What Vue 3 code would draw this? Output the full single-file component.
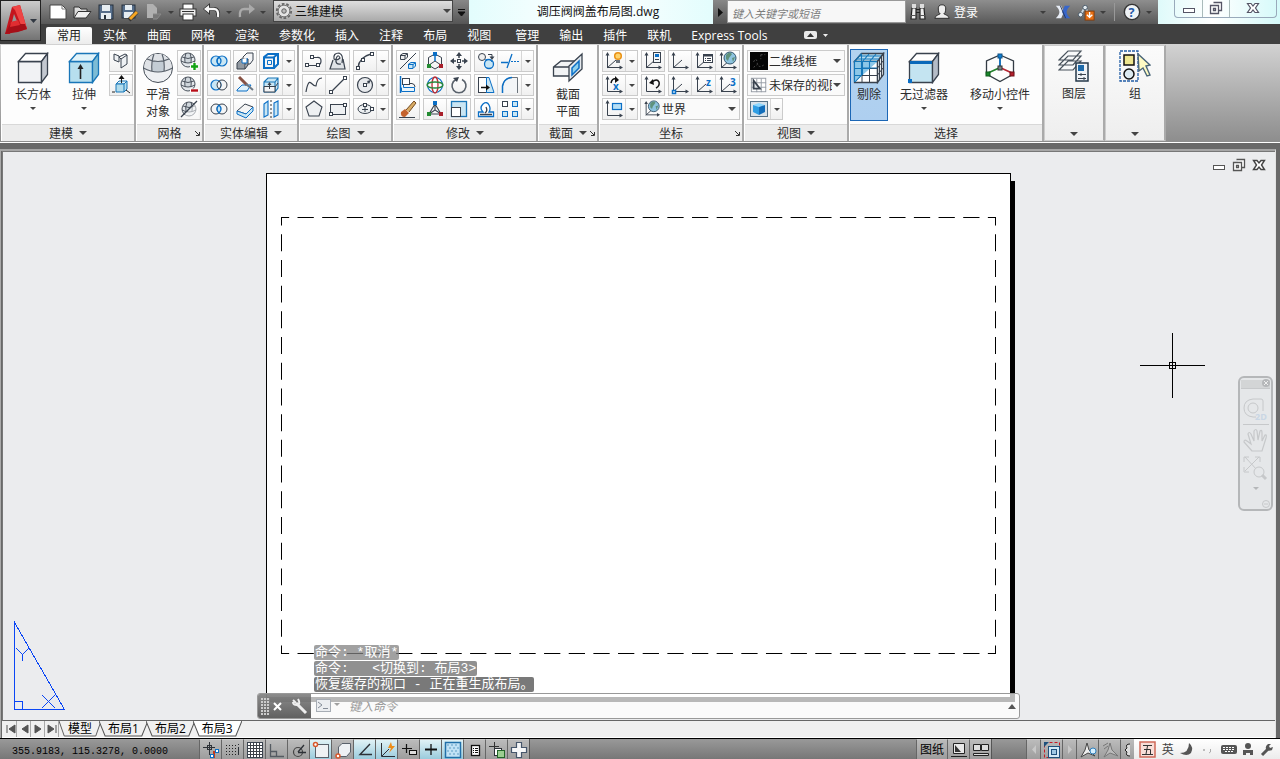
<script setup>
import { ref } from 'vue'

const K = '#39424e'
const B = '#0b6fc6'
const L = '#c9e6f4'
const line = (d, c = K, w = 1, f = 'none') => `<path d="${d}" stroke="${c}" stroke-width="${w}" fill="${f}"/>`
const fill = (d, c) => `<path d="${d}" fill="${c}"/>`
const rect = (x, y, w, h, f = 'none', s = K, sw = 1) => `<rect x="${x}" y="${y}" width="${w}" height="${h}" fill="${f}" stroke="${s}" stroke-width="${sw}"/>`
const circ = (x, y, r, f = 'none', s = K, sw = 1) => `<circle cx="${x}" cy="${y}" r="${r}" fill="${f}" stroke="${s}" stroke-width="${sw}"/>`
const letter = (x, y, t, c = B, s = 10) => `<text x="${x}" y="${y}" font-family="Open Sans, sans-serif" font-weight="700" font-size="${s}" fill="${c}">${t}</text>`
const axes = line('M3.5 3V16.5H17M3 17L12 9', K) + fill('M3.5 1L1.5 4.5H5.5ZM19 16.5L15.5 14.5V18.5Z', K)
const ball = (x, y, r) => circ(x, y, r, '#e3e7eb', '#4a525c') + fill(`M${x - 3} ${y - r + 1}H${x + 3}V${y + 3}H${x - 3}Z`, '#cfd6dc') + line(`M${x - r} ${y + 1}Q${x} ${y + 5} ${x + r} ${y + 1}M${x - r + 1} ${y - 3}Q${x} ${y} ${x + r - 1} ${y - 3}M${x - 2} ${y - r}Q${x - 4} ${y - 2} ${x - 3} ${y + 3}M${x + 2} ${y - r}Q${x + 4} ${y - 2} ${x + 3} ${y + 3}`, '#4a525c')
const globe = (x, y) => circ(x, y, 6, '#8dc3df', '#34566d') + fill(`M${x - 4} ${y - 3}Q${x - 1} ${y - 7} ${x + 2} ${y - 4}L${x - 1} ${y}L${x - 2} ${y + 3}L${x - 4} ${y + 1}ZM${x + 2} ${y}L${x + 5} ${y - 1}L${x + 3} ${y + 4}Z`, '#5f927c')
const cube = (f, t, s, e = K) => line('M1.5 9.5H24.5V30.5H1.5Z', e, 1.3, f) + line('M1.5 9.5L8.5 1.5H30.5L24.5 9.5Z', e, 1.3, t) + line('M30.5 1.5V22.5L24.5 30.5V9.5Z', e, 1.3, s)

const icons = {
  box: cube('#f1f2f4', '#ffffff', '#c3c8d0'),
  extrude: cube('#b7dfee', '#e2f3f9', '#7dbcd5', '#1976b8') + line('M12.5 27V15', '#222', 1.6) + fill('M12.5 12L9.5 17H15.5Z', '#222'),
  sphere: circ(16, 16, 14.5, '#eef0f3', '#454d57') + fill('M2 17Q2 6 12 2H20Q30 6 30 17Q16 24 2 17Z', '#dfe2e6') + fill('M11 9Q16 10.5 21 9L22 19Q16 21 10 19Z', '#c3ccd4') + line('M1.5 16Q16 24 30.5 16M5 7Q16 12 27 7M12 2Q9 10 10 19.5M20 2Q23 10 22 19.5', '#59616b', 1.2),
  polysolid: line('M3 3L8 5V11L3 9ZM8 6L14 3L16 4V13L10 17V8L16 4M10 8L8 6', K, 1, '#eef1f4'),
  presspull: line('M5 9L8 6H16L13 9Z', '#1976b8', 1, '#e5f4fa') + line('M5 9H13V17H5ZM13 9L16 6V14L13 17', '#1976b8', 1, '#b2dcec') + line('M10.5 8V3M1 17H4M15 15L19 18', '#222') + fill('M10.5 0L7.5 4H13.5Z', '#111'),
  meshplus: ball(9, 9, 7) + line('M11 15.5H19M15 11.5V19.5', '#fff', 4) + line('M12 15.5H19M15.5 12V19', '#14a314', 2.4),
  meshminus: ball(9, 9, 7) + line('M11 15.5H19.5', '#fff', 4) + line('M12 15.5H19', '#b80d18', 2.4),
  meshcut: ball(10, 10, 7) + fill('M18 2L20 20H2Z', '#ffffff88') + line('M2 18L18 2', K, 1.3),
  union: circ(7, 10, 5, L, B, 1.2) + circ(13, 10, 5, L, B, 1.2) + line('M10 6Q6 10 10 14Q14 10 10 6', B, 1.2),
  subtract: circ(13, 10, 5, '#f4f5f6') + circ(7, 10, 5, L, B, 1.2) + line('M10 6Q6 10 10 14Q14 10 10 6', K, 1, '#f4f5f6'),
  intersect: circ(7, 10, 5, '#f4f5f6') + circ(13, 10, 5, '#f4f5f6') + line('M10 6Q6 10 10 14Q14 10 10 6', B, 1.3, L),
  interfere: line('M8 6L12 2H18V9L15 13H8Z', K, 1, '#f3f4f6') + line('M2 12L6 8H13L10 12V18H2ZM13 8V14L10 18', K, 1, '#9299a1') + line('M7 8V12H12V7', B, 1, '#fff'),
  slice: line('M2 15L7 10H16L12 16H2Z', B, 1, '#dff1fa') + line('M4 2L12 10', '#875143', 3) + line('M11 9L18 15', '#6c7883', 2),
  thicken: line('M2 12L10 5L18 8L11 15Z', K, 1, '#f5f5f5') + line('M2 12V15L11 19L18 12V8L11 15Z', B, 1, L),
  frame: line('M3 6.5H13V17H3ZM3 6L7 3H17V13L13 17M13 6L17 3', B, 2) + line('M6.5 9.5H10.5V13.5H6.5Z', B, 1),
  faces: line('M3 7H14V17H3ZM3 7L7 3H17V13L14 17M14 7L17 3', '#1976b8', 1.1, L) + line('M3 11.5H14V17H3ZM14 12L17 8', K, 1, '#f3f4f5') + line('M8.5 14V9') + fill('M8.5 7L6.5 10H10.5Z', K),
  mirror3: line('M3 5L7 2V16L3 18ZM13 4L17 2V16L13 18Z', B, 1.1, L) + '<path d="M10 1V19" stroke="#333" stroke-dasharray="2 2"/>',
  pline: line('M3 14.5H13Q17 14 17 10Q17 6 13 6.5H8', K, 1.2) + rect(1.5, 12.5, 3, 3, '#fff') + rect(6.5, 4.5, 3, 3, '#fff') + rect(12.5, 12.5, 3, 3, '#fff'),
  region: line('M5 9L2 18H17L15 8', K, 1.2, '#dfe3e7') + line('M14 12Q16 4 11 2Q5 2 6 8Q9 10 12 7Q10 2 8 8Q7 14 13 13', K, 1.2),
  arc: line('M3 17Q4 6 16 3', K, 1.3) + rect(1.5, 15.5, 3, 3, '#fff') + rect(6.5, 7.5, 3, 3, '#fff') + rect(15.5, 1.5, 3, 3, '#fff'),
  spline: line('M2 17Q4 5 7 8T12 11Q13 3 18 3', K, 1.2),
  line: line('M4 16L16 4', K, 1.2) + rect(1.5, 15.5, 3, 3, '#fff') + rect(15.5, 1.5, 3, 3, '#fff'),
  circle: circ(10, 10, 7.5, '#e8eaed', K, 1.2) + line('M10 10L15 6') + rect(8.5, 8.5, 3, 3, '#fff') + fill('M16 5L12 6L14 9Z', K),
  polygon: line('M10 2L18 8L15 17H5L2 8Z', K, 1.1, '#eef0f2'),
  rectangle: rect(2.5, 5.5, 15, 10, '#eef0f2') + rect(1.5, 13.5, 3, 3, '#fff') + rect(15.5, 4.5, 3, 3, '#fff'),
  ellipse: '<ellipse cx="10" cy="10" rx="7" ry="4.500" fill="#edf0f2" stroke="#39424e"/>' + line('M10 8V13M7 10.5H13') + rect(15.5, 8.5, 3, 3, '#fff') + rect(8.5, 4.5, 3, 3, '#fff'),
  align3: line('M2.5 8.5V4L5 2.5H9.5V6L7 8.5ZM3 4.5H7V8M7 4.5L9 3', K, 1, '#eee') + line('M2 18L18 2') + line('M10.5 17.5V13L13 11.5H17.5V15L15 17.5ZM11 13.5H15V17M15 13.5L17 12', B, 1, L),
  align: line('M2.5 1V18', B, 1.5) + rect(4.5, 3.5, 7, 6, '#fff') + line('M5.5 9.5V12.500H16.500V16.500H3.500V12.500', B, 1, '#eaf5fb') + line('M12 8.5H14Q17 9 17 12', K),
  erase: line('M8 11L16 2L18 4L11 13', '#754c24', 1, '#d9ac64') + fill('M7 10L11 14L7 18Q2 18 3 13Z', '#c4632e') + line('M1 18.5H17', K),
  gizmo3: line('M10 3L16.500 6.500V14L10 18L3.500 14V6.500ZM10 10L16 14M10 10L4 14', K) + line('M10 3V10', B, 1.5) + fill('M8 1H12V5H8Z', B) + fill('M2 13H6V17H2Z', '#238b31') + fill('M14 13H18V17H14Z', '#a91f2a'),
  move: line('M10 3V7M10 13V17M3 10H7M13 10H17', K, 1.5) + rect(8.5, 8.5, 3, 3, '#fff') + fill('M10 1L7 5H13ZM10 19L7 15H13ZM1 10L5 7V13ZM19 10L15 7V13Z', K),
  rotate3: circ(10, 10, 7.5, '#fff', B, 1.2) + '<ellipse cx="10" cy="10" rx="3" ry="8" fill="none" stroke="#be3037" stroke-width="1.300"/><ellipse cx="10" cy="10" rx="8" ry="3" fill="none" stroke="#29883c" stroke-width="1.300"/>',
  rotate: line('M7 4.500A7 7 0 1 0 13 4.500', '#5a626c', 1.6) + fill('M4 3L10 2L8 7Z', K),
  scale3: line('M10 5L4 15H16ZM10 5V11L16 15M10 11L4 15', K, 1.1) + fill('M8 2H12V6H8Z', B) + fill('M2 13H6V17H2Z', '#238b31') + fill('M14 13H18V17H14Z', '#a91f2a'),
  scale: rect(2.5, 2.5, 15, 15, L, '#1976b8', 1.3) + rect(2.5, 8.5, 9, 9, '#fff', K),
  copy: circ(6, 6, 3.5, '#f0f0f0') + circ(13, 13, 4.5, L, B, 1.3) + line('M9 9Q14 7 16 11', B) + line('M12 3.500H16V6') + fill('M16 9L13.500 5.500H18.500Z', K),
  trim: line('M1 11.500H8M7 17L12 3', B, 1.3) + '<path d="M11 10.500H19" stroke="#0b6fc6" stroke-dasharray="2 1"/>',
  stretch: rect(2.5, 2.5, 8, 15, '#fff') + line('M10.500 2.500H13L18 17.500H10.500Z', B, 1, L) + line('M5 12.500H11', '#111', 1.500) + fill('M14 12.500L10 9.500V15.500Z', '#111'),
  fillet: line('M2.500 18V11Q4 3 12 2.500H17.500V18', '#6c747c', 1, '#f3f5f7') + line('M2.500 18V11Q4 3 12 2.500', B, 1.5),
  offset: line('M2.500 17.500H17.500V13H13Q15 10 13 6Q11 2 7 5Q3 9 7 13H2.500Z', B, 1.300, '#fff') + line('M4 15.500H16M9 14Q12 12 10 8', K, 1.300),
  array: rect(2.5, 2.5, 5, 5, '#fff') + rect(12.5, 2.5, 5, 5, L, B) + rect(2.5, 12.5, 5, 5, L, B) + rect(12.5, 12.5, 5, 5, L, B),
  section: line('M1.500 15L9 9H26V18L20 24H1.500ZM1.500 15H20', K, 1.300, '#f1f3f5') + line('M17 14L30 2V17L17 29Z', K, 1.300, '#e6eaee') + line('M20 16L27 9V16L20 23Z', B, 1.500, '#8fd0ec'),
  ucsbulb: axes + circ(14, 5, 3.3, '#ffd36b', '#e99116', 1.5) + fill('M12 9H16V12H12Z', '#6b737c'),
  ucsdoc: axes + rect(10.5, 1.5, 7, 10, '#f1f5f8') + fill('M12 3H16V6H12Z', B) + line('M12 8.5H16'),
  ucs: axes,
  ucsview: axes + rect(9.5, 3.5, 9, 8, '#fff') + line('M9 4.500H19', K, 2) + line('M11 7.500H12M13 7.500H17M11 9.500H12M13 9.500H17'),
  ucsglobe: axes + globe(12, 7),
  ucsx: line('M3.500 4V16.500H17', K) + fill('M3.500 1L1.500 4.500H5.500ZM19 16.500L15.500 14.500V18.500Z', K) + line('M7 8Q8 3 12 4', '#111', 1.5) + fill('M15 5L11 1V8Z', '#111') + letter(9, 15, 'x'),
  ucsback: line('M3.500 4V16.500H17', K) + fill('M3.500 1L1.500 4.500H5.500ZM19 16.500L15.500 14.500V18.500Z', K) + line('M9 7Q14 3 16 7Q17 11 13 13', '#111', 1.5) + fill('M6 8L10 4L11 10Z', '#111'),
  ucsorigin: axes + rect(2.5, 15.5, 3, 3, '#fff', B, 1.5),
  ucsz: axes + letter(12, 11, 'z'),
  ucs3: axes + letter(12, 11, '3'),
  ucsrect: line('M3.500 3V16.500H17', K) + fill('M3.500 1L1.500 4.500H5.500ZM19 16.500L15.500 14.500V18.500Z', K) + rect(8.5, 4.5, 9, 6, '#b7dff5', B, 1.2),
  wire: '<rect width="20" height="20" fill="#050505"/><path d="M12 3H17M12 3V8M4 11Q7 5 8 12T16 14M4 17L8 14" fill="none" stroke="#555" stroke-dasharray="2 2"/>',
  viewset: rect(1.5, 2.5, 16, 15, '#fff', '#9298a1') + line('M1 7.500H18M1 12.500H18M7.500 3V18M12.500 3V18', '#9298a1') + line('M4 5V14H11Z', K, 2, '#dfe3e8'),
  viewcube: rect(1.5, 2.5, 17, 15, '#d7e2ea', '#577287') + fill('M10 4L16 6L10 8L4 6Z', '#8bd7ff') + fill('M4 6L10 8V16L4 13Z', '#2f9ee4') + fill('M16 6L10 8V16L16 13Z', '#136ebb'),
  cull: cube('#ffffff', '#b9def0', '#e4e9ee') + fill('M2 10H24L2 30Z', '#8cc7e8') + line('M9 16V30M16.500 10V30M2 16.500H24M2 23.500H24M26.500 7V28M28.500 4V25M24.500 16L30 9M24.500 23L30 16', K) + line('M1.500 30V9.500L8.500 1.500M1.500 9.500H24M9.500 9.500V23M16.500 9.500V17M2 16.500H16M2 23.500H9M9.500 9.500L16 2M16.500 9.500L23 2M4 7H26M6 4H28M8.500 2V23L2 30M9 16H24', '#1477b9', 1.1),
  nofilter: cube('#c4e4f1', '#ffffff', '#b5bcc7') + fill('M2 9H24V12H2Z', '#0968b9') + fill('M0 27H4V31H0Z', B),
  gizmo: line('M16 3L29.500 9V22L16 29.500L2.500 22V9Z', '#333b44', 1.3) + line('M16 4V14', '#1b75bd', 2) + line('M15 16L4 21', '#22822c', 1.6) + line('M17 16L28 21', '#b52432', 1.6) + rect(14, 2, 4, 4, '#0d7cd0', '#145486') + rect(2, 20, 4, 4, '#19862a', '#0f5a1b') + rect(26, 20, 4, 4, '#b21e2b', '#701119') + rect(14, 14, 4, 4, '#7a848a', '#333'),
  layers: line('M1 20L10 11H23L15 20ZM1 15L10 6H23L15 15ZM1 10L10 1H23L15 10Z', '#48525c', 1.2, '#f8f9fa') + rect(18, 13, 12, 18, '#eef2f6', '#26384a', 1.5) + fill('M20 15H26V21H20Z', '#1d6aaa') + line('M20 24.500H28M20 28.500H28M23 23V26M26 27V30'),
  group: '<path d="M1 1H19V31H1Z" stroke="#235ea6" stroke-width="1.300" stroke-dasharray="3 1" fill="none"/>' + rect(5, 5, 10, 10, '#eee68f', '#111', 1.5) + circ(10, 24, 5, '#dceaf1', '#111', 1.5) + line('M19 4L20 21L24 18L28 26L31 25L27 16L31 15Z', '#496578', 1.4, '#fffbc4'),
  new: line('M2 3H14L18 7V17H2Z', '#444', 1, '#fff') + line('M14 3V7H18', '#777'),
  open: line('M2 16V5H7L9 7H15V10', '#333', 1, '#ddd') + line('M2 16L6 9.500H19L14 16Z', '#333', 1, '#f1f1f1'),
  save: rect(3, 3, 14, 14, '#566e8b', '#26313c') + fill('M6 3H14V9H6ZM5 11H15V17H5Z', '#e6edf2') + fill('M8 13H10V17H8Z', '#26313c'),
  saveas: rect(2, 3, 13, 13, '#566e8b', '#26313c') + fill('M5 3H12V8H5ZM4 10H13V16H4Z', '#e6edf2') + line('M9 18L17 10', '#333', 4) + line('M10 17L17 10', '#f6a623', 3),
  web: fill('M3 2H9L13 6V16H3Z', '#b0b0b0') + line('M9 12L17 12L13 17H9', '#8a8a8a', 1, '#777'),
  print: rect(5, 2, 10, 6, '#fff', '#333') + rect(2, 7, 16, 7, '#eee', '#333') + rect(5, 12, 10, 6, '#fff', '#333') + line('M4 9.500H16', '#333', 1),
  undo: line('M5 7H12Q17 7 16 15', '#333', 4) + fill('M1 7L8 1V13Z', '#333') + line('M6 7H12Q17 7 16 15', '#f7f7f7', 2.4) + fill('M2 7L7 3V11Z', '#f7f7f7'),
  redo: line('M15 7H8Q3 7 4 15', '#aaa', 2.4) + fill('M19 7L13 2V12Z', '#aaa'),
  gear: '<circle cx="10" cy="10" r="8" fill="none" stroke="#666" stroke-width="2" stroke-dasharray="3 2"/>' + circ(10, 10, 6.5, '#e4e4e4', '#666') + circ(10, 10, 2.5, '#bbb', '#555'),
  bino: line('M3 17L4 6H8L8 17ZM12 17L12 6H16L17 17ZM8 7.500H12M8 10.500H12', '#222', 1.2, '#eee') + fill('M4 2H8V6H4ZM12 2H16V6H12Z', '#ddd') + line('M3 13.500H8M12 13.500H17', '#555'),
  user: line('M10 2Q15 2 14 8Q14 11 12 12Q18 14 18 17H2Q2 14 8 12Q6 11 6 8Q5 2 10 2Z', '#222', 1, '#eee'),
  exchange: fill('M2 3H8L11 10L8 17H2Q6 13 6 10Q6 7 2 3Z', '#e8edf6') + fill('M18 3H12L9 10L12 17H18Q14 13 14 10Q14 7 18 3Z', '#3766cb') + line('M7 3L13 17', '#26375c', 1),
  plus: line('M4 13L9 4L13 13', '#ccd9e2', 2) + circ(9, 5, 2.5, '#e5ecf1', '#435463') + circ(4, 13, 2.5, '#e5ecf1', '#435463') + rect(9, 9, 10, 10, '#e76e12', '#7e3b0c') + line('M14 10V15M11 13L14 16L17 13', '#fff', 1.5),
  help: circ(10, 10, 8.5, '#eef2f5', '#333', 1.5) + letter(6, 15, '?', '#2458a6', 14)
}

const g = (i, drop = false) => ({ i: i.split(' '), drop })
const panels = [
  { label: '建模', arrow: true, width: 135, big: [{ i: 'box', t: ['长方体'], w: 52, drop: true }, { i: 'extrude', t: ['拉伸'], w: 50, drop: true }], rows: [[g('polysolid')], [g('presspull')]] },
  { label: '网格', launch: true, width: 68, big: [{ i: 'sphere', t: ['平滑', '对象'], w: 38 }], rows: [[g('meshplus')], [g('meshminus')], [g('meshcut')]] },
  { label: '实体编辑', arrow: true, width: 95, rows: [[g('union'), g('interfere'), g('frame', true)], [g('subtract'), g('slice'), g('faces', true)], [g('intersect'), g('thicken'), g('mirror3', true)]] },
  { label: '绘图', arrow: true, width: 94, rows: [[g('pline region'), g('arc', true)], [g('spline line'), g('circle', true)], [g('polygon rectangle'), g('ellipse', true)]] },
  { label: '修改', arrow: true, width: 145, rows: [[g('align3'), g('gizmo3 move'), g('copy trim', true)], [g('align'), g('rotate3 rotate'), g('stretch fillet', true)], [g('erase'), g('scale3 scale'), g('offset array', true)]] },
  { label: '截面', arrow: true, launch: true, width: 61, big: [{ i: 'section', t: ['截面', '平面'], w: 54 }], rows: [] },
  { label: '坐标', launch: true, width: 145, rows: [[g('ucsbulb', true), g('ucsdoc'), g('ucs ucsview ucsglobe')], [g('ucsx', true), g('ucsback'), g('ucsorigin ucsz ucs3')], [g('ucsrect', true), { select: '世界', i: 'ucsglobe' }]] },
  { label: '视图', arrow: true, width: 105, rows: [[{ select: '二维线框', i: 'wire' }], [{ select: '未保存的视图', i: 'viewset' }], [g('viewcube', true)]] },
  { label: '选择', width: 195, flush: true, big: [{ i: 'cull', t: ['剔除'], w: 38, on: true }, { i: 'nofilter', t: ['无过滤器'], w: 72, drop: true }, { i: 'gizmo', t: ['移动小控件'], w: 80, drop: true }], rows: [] }
]

const tabs = ['常用', '实体', '曲面', '网格', '渲染', '参数化', '插入', '注释', '布局', '视图', '管理', '输出', '插件', '联机', 'Express Tools']
const tab = ref('常用')
const quick = ['new', 'open', 'save', 'saveas', 'web', '|', 'print', 'undo', '|', 'redo', '|']
const nav = ['M4 2V10M12 2L6 6L12 10Z', 'M11 2L5 6L11 10Z', 'M4 2L10 6L4 10Z', 'M11 2V10M3 2L9 6L3 10Z']
const sheets = ['模型', '布局1', '布局2', '布局3']
const sheet = ref('布局3')
const D = '#2d3137'
const status = [
  { t: '推断约束', s: line('M7.500 1V14M1 6.500H13', D) + rect(5.5, 4.5, 4, 4, 'none', D) + line('M12 17V10', '#c33b1c', 2) + rect(13.5, 8.5, 3, 3, '#fff', B) + rect(8.500, 13.500, 3, 3, '#fff', B) },
  { t: '捕捉', s: '<path d="M2 4.500H12M2 7.500H12M2 10.500H12M2 13.500H12" stroke="#222" stroke-dasharray="1 2"/>' + line('M14.500 6V14M14.500 3V4', D) },
  { t: '栅格', s: rect(1.5, 1.5, 15, 15, '#fff') + line('M4.500 2V16M7.500 2V16M10.500 2V16M13.500 2V16M2 4.500H16M2 7.500H16M2 10.500H16M2 13.500H16', '#3c4148') },
  { t: '正交', s: line('M2.500 3V15.500H16M2.500 10.500H8.500V15', '#555b62', 1.3) },
  { t: '极轴', s: circ(8, 11, 4.5, 'none', '#444', 1.2) + line('M8 11L14 4M8 11.500H16', D, 1.3) },
  { t: '对象捕捉', on: true, s: rect(3.5, 3.5, 13, 13, '#eef1f4', '#59616b') + circ(3.5, 3.5, 2, '#fff', '#d8572b', 1.5) },
  { t: '三维捕捉', s: line('M4.500 6L8 2.500H16.500V11L12.500 15.500H4.500Z', '#59616b', 1, '#eef1f4') + circ(4, 15, 2, '#fff', '#d8572b', 1.5) },
  { t: '对象追踪', on: true, s: line('M14 3L4 13.500H16', D, 1.4) },
  { t: '动态坐标系', on: true, s: line('M3.500 2V15.500H17M4 15L11 8', D) + fill('M13 1L10 7H13L11 12L17 5H14Z', '#ed8c17') },
  { t: '动态输入', s: line('M6.500 3V12M2 7.500H12', '#111', 1.2) + rect(9.5, 9.5, 7, 4, '#ddd', '#111') },
  { t: '线宽', on: true, s: line('M9 3V14', '#111', 1.3) + line('M3 8.500H15', '#111', 2) },
  { t: '透明度', on: true, s: rect(1.5, 1.5, 15, 15, '#c1e2f5', '#2170a9', 1.5) + '<path d="M3 4H15M5 7H15M3 10H15M5 13H15" stroke="#8fbfdc" stroke-width="2" stroke-dasharray="2 2"/>' },
  { t: '快捷特性', s: rect(5.5, 4.5, 8, 10, '#fff', '#111', 1.3) + line('M7 7.500H8M9 7.500H12M7 9.500H8M9 9.500H12M7 11.500H8M9 11.500H12', '#111') },
  { t: '选择循环', s: line('M6.500 1V10M1 5.500H11', '#333') + rect(6.5, 7.5, 7, 7, '#fff', D) + rect(9.5, 9.5, 7, 7, '#9bce91', '#226629') },
  { t: '注释监视器', s: line('M6.500 1.500H11.500V6.500H16.500V11.500H11.500V16.500H6.500V11.500H1.500V6.500H6.500Z', '#46566b', 1.2, '#f6f7f8') }
]
</script>

<template>
  <div class="app">
    <header class="head">
      <button class="appmenu" aria-label="应用程序菜单">
        <svg width="38" height="38" viewBox="0 0 38 38"><path d="M4 32L11 5L19 3L26 27L19 29L17 23L11 24L9 32Z" fill="#c5151d"/><path d="M11 5L19 3L26 27L22 28L14 8Z" fill="#ee4544"/><path d="M13 12L11 20L16 19Z" fill="#979797"/><path d="M4 32L9 22L24 22L26 27L17 30Z" fill="#a60f18"/><path d="M10 20L17 18L19 23L9 25Z" fill="#e02d31"/><path d="M29 17H36L32.500 21Z" fill="#313842"/></svg>
      </button>
      <div class="titlebar">
        <div class="quick">
          <template v-for="(q, n) in quick" :key="n">
            <i v-if="q === '|'" class="caret dim"></i>
            <button v-else class="plain" :aria-label="q"><svg width="20" height="20" viewBox="0 0 20 20" v-html="icons[q]"></svg></button>
          </template>
        </div>
        <label class="workspace">
          <svg width="18" height="18" viewBox="0 0 20 20" v-html="icons.gear"></svg>
          <select aria-label="工作空间"><option>三维建模</option></select><i class="caret wide"></i>
        </label>
        <button class="qmore" aria-label="自定义"><svg width="9" height="9"><path d="M1 1.500H8M1 4H8L4.500 8Z" stroke="#111" fill="#111"/></svg></button>
        <h1>调压阀阀盖布局图.dwg</h1>
        <button class="qmore slim" aria-label="展开"><svg width="6" height="9"><path d="M1 0L6 4.500L1 9Z" fill="#111"/></svg></button>
        <input class="search" aria-label="搜索" placeholder="键入关键字或短语">
        <div class="account">
          <button class="plain" aria-label="查找"><svg width="20" height="20" viewBox="0 0 20 20" v-html="icons.bino"></svg></button>
          <button class="login"><svg width="18" height="18" viewBox="0 0 20 20" v-html="icons.user"></svg>登录</button>
          <i class="caret dim end"></i>
          <button class="plain" aria-label="Exchange"><svg width="18" height="18" viewBox="0 0 20 20" v-html="icons.exchange"></svg></button>
          <button class="plain" aria-label="联机服务"><svg width="18" height="18" viewBox="0 0 20 20" v-html="icons.plus"></svg></button>
          <i class="caret dim"></i><span class="rule"></span>
          <button class="plain" aria-label="帮助"><svg width="18" height="18" viewBox="0 0 20 20" v-html="icons.help"></svg></button>
          <i class="caret dim"></i>
        </div>
        <div class="winzone"><div class="wins">
          <button aria-label="最小化"><svg width="14" height="14"><rect x="1.500" y="7.500" width="11" height="4" fill="#fff" stroke="#556"/></svg></button>
          <button aria-label="还原"><svg width="14" height="14"><path d="M4.500 1.500H12.500V9.500H10M1.500 4.500H9.500V12.500H1.500ZM4.500 7.500H6.500V9.500H4.500Z" fill="#fff" stroke="#556" stroke-width="1.300"/></svg></button>
          <button aria-label="关闭"><svg width="14" height="14"><path d="M1.500 2.500H5L7 5L9 2.500H12.500L9.500 7L12.500 11.500H9L7 9L5 11.500H1.500L4.500 7Z" fill="#fff" stroke="#556" stroke-width="1.200"/></svg></button>
        </div></div>
      </div>
      <nav class="tabs">
        <button v-for="t in tabs" :key="t" :class="{ on: t === tab, later: t === '管理' }" @click="tab = t">{{ t }}</button>
        <button class="collapse" aria-label="最小化功能区"><svg width="26" height="9"><rect width="13" height="8" rx="2" fill="#e9e9e9"/><path d="M3 6L6.500 2L10 6Z" fill="#333"/><path d="M19 3H24L21.500 6Z" fill="#eee"/></svg></button>
      </nav>
    </header>

    <div class="ribbon">
      <section v-for="p in panels" :key="p.label" class="panel" :class="{ flush: p.flush }" :style="{ width: p.width + 'px' }">
        <div class="body">
          <button v-for="b in p.big" :key="b.i" class="big" :class="{ on: b.on }" :style="{ width: b.w + 'px' }">
            <svg width="32" height="32" viewBox="0 0 32 32" v-html="icons[b.i]"></svg>
            <span v-for="t in b.t" :key="t">{{ t }}</span>
            <i v-if="b.drop" class="caret"></i>
          </button>
          <div v-if="p.rows.length" class="rows">
            <div v-for="(r, n) in p.rows" :key="n" class="row">
              <template v-for="(c, m) in r" :key="m">
                <label v-if="c.select" class="combo">
                  <svg width="18" height="18" viewBox="0 0 20 20" v-html="icons[c.i]"></svg>
                  <select :aria-label="p.label"><option>{{ c.select }}</option></select><i class="caret"></i>
                </label>
                <div v-else class="group">
                  <button v-for="i in c.i" :key="i" :aria-label="i"><svg width="20" height="20" viewBox="0 0 20 20" v-html="icons[i]"></svg></button>
                  <button v-if="c.drop" class="drop" aria-label="更多"><i class="caret"></i></button>
                </div>
              </template>
            </div>
          </div>
        </div>
        <footer><span>{{ p.label }}</span><i v-if="p.arrow" class="caret wide"></i>
          <svg v-if="p.launch" class="launch" width="7" height="7"><path d="M1 1L5 5M5.500 2V5.500H2" stroke="#333" fill="none"/></svg>
        </footer>
      </section>
      <button class="folded"><svg width="32" height="32" viewBox="0 0 32 32" v-html="icons.layers"></svg><span>图层</span><i class="caret wide"></i></button>
      <button class="folded"><svg width="32" height="32" viewBox="0 0 32 32" v-html="icons.group"></svg><span>组</span><i class="caret wide"></i></button>
    </div>

    <main class="work">
      <div class="canvas">
        <div class="paper">
          <svg class="margin" width="100%" height="100%">
            <g stroke="#000" stroke-width="2" stroke-dasharray="66 34" stroke-dashoffset="33">
              <line x1="0" y1="0" x2="100%" y2="0" pathLength="2900"/><line x1="0" y1="100%" x2="100%" y2="100%" pathLength="2900"/>
              <line x1="0" y1="0" x2="0" y2="100%" pathLength="1700"/><line x1="100%" y1="0" x2="100%" y2="100%" pathLength="1700"/>
            </g>
          </svg>
        </div>
        <div class="docwins">
          <button aria-label="最小化"><svg width="14" height="14"><rect x="1.500" y="7.500" width="11" height="4" fill="#fff" stroke="#555"/></svg></button>
          <button aria-label="还原"><svg width="14" height="14"><path d="M4.500 1.500H12.500V9.500H10M1.500 4.500H9.500V12.500H1.500ZM4.500 7.500H6.500V9.500H4.500Z" fill="#fff" stroke="#555" stroke-width="1.300"/></svg></button>
          <button aria-label="关闭"><svg width="14" height="14"><path d="M1.500 2.500H5L7 5L9 2.500H12.500L9.500 7L12.500 11.500H9L7 9L5 11.500H1.500L4.500 7Z" fill="#fff" stroke="#444" stroke-width="1.400"/></svg></button>
        </div>
        <svg class="cross" width="65" height="65" shape-rendering="crispEdges"><path d="M0 32.500H65M32.500 0V65M29.500 29.500H35.500V35.500H29.500Z" stroke="#000" fill="none"/></svg>
        <svg class="ucsicon" width="54" height="90" shape-rendering="crispEdges"><path d="M1.500 1.500V88.500H51.500ZM1.500 80.500H9.500V88.500M3 27L9.500 33.500L16 27M9.500 33.500V40M29 74L42 87M42 74L29 87" stroke="#0a46f5" fill="none"/></svg>
        <aside class="navbar">
          <svg width="35" height="136" viewBox="0 0 35 136" fill="none" stroke="#c6c8ca">
            <rect x="1" y="1" width="33" height="133" rx="5" fill="#e5e7e9" stroke="#b5b7b9" stroke-width="2"/>
            <path d="M3 4H32V12H3Z" fill="#d3d5d6" stroke="none"/><path d="M3 12.500H32M5 48.500H31"/>
            <circle cx="28" cy="7" r="4" fill="#b5b7b9" stroke="none"/><path d="M26 5L30 9M30 5L26 9" stroke="#eee"/>
            <path d="M25 35V25Q25 23 23 23H15Q6 24 6 32Q6 40 15 41H18"/><circle cx="15" cy="32" r="5"/>
            <text x="17" y="44" font-family="Open Sans, sans-serif" font-size="9" font-weight="700" fill="#c9d6e4" stroke="none">2D</text>
            <path d="M14 75L6 66Q6 63 9 65L13 68L10 58Q11 55 13 58L16 65V55Q18 52 19 55L20 64L22 55Q24 53 24 57V65L27 59Q29 58 28 62L24 75Z" stroke-width="1.200"/>
            <path d="M7 81L20 95M21 81L7 95M6 86V81H11M17 81H22V86M6 91V96H11"/><circle cx="21" cy="96" r="5" fill="#e5e7e9"/><path d="M24 99L28 103" stroke-width="3"/>
            <path d="M15 111H21L18 114Z" fill="#b5b7b9" stroke="none"/><circle cx="28" cy="128" r="3.500"/><path d="M26 128H30"/>
          </svg>
        </aside>
        <div class="console">
          <p class="one">命令: *取消*</p><p class="two">命令:&nbsp;&nbsp; &lt;切换到: 布局3&gt;</p><p class="three">恢复缓存的视口 - 正在重生成布局。</p>
          <div class="cmd">
            <div class="grip">
              <svg width="53" height="24"><path d="M4 4V22M7 4V22M10 4V22" stroke="#ccc" stroke-width="2" stroke-dasharray="2 1"/><path d="M16 9L23 16M23 9L16 16" stroke="#fff" stroke-width="2"/><path d="M38 9L48 19" stroke="#eee" stroke-width="3"/><path d="M35 6L38 9M40 5Q43 10 39 11Q35 11 35 8" stroke="#eee" stroke-width="2" fill="none"/></svg>
            </div>
            <svg width="34" height="16"><rect x="1.500" y="1.500" width="14" height="12" fill="#ebedf0" stroke="#a7adb5"/><path d="M3 4L7 7L3 10M8 10.500H13" stroke="#868d98" fill="none"/><path d="M19 5H25L22 8Z" fill="#a0a0a0"/></svg>
            <input aria-label="命令行" placeholder="键入命令"><i class="upcaret"></i>
          </div>
        </div>
      </div>
      <div class="sheets">
        <button v-for="(d, n) in nav" :key="n" class="step" aria-label="切换"><svg width="14" height="12"><path :d="d" fill="#555" stroke="#555"/></svg></button>
        <button v-for="s in sheets" :key="s" class="sheet" :class="{ on: s === sheet }" @click="sheet = s">
          <svg viewBox="0 0 48 16" preserveAspectRatio="none" aria-hidden="true"><path d="M0 0L6 15H42L48 0"/></svg><span>{{ s }}</span>
        </button>
      </div>
    </main>

    <footer class="status">
      <output>355.9183, 115.3278, 0.0000</output>
      <button v-for="s in status" :key="s.t" class="st" :class="{ on: s.on }" :aria-label="s.t"><svg width="18" height="18" v-html="s.s"></svg></button>
      <span class="grow"></span>
      <button class="st space">图纸</button>
      <button class="st" aria-label="快速查看布局"><svg width="18" height="18"><path d="M3.500 2.500H14.500V12.500H3.500ZM1 15.500H17" stroke="#222" fill="#e8e8e8"/><path d="M5 4V11H11Z" fill="#333"/></svg></button>
      <button class="st" aria-label="快速查看图形"><svg width="18" height="18"><path d="M1.500 3.500H8.500V9.500H1.500ZM9.500 3.500H16.500V9.500H9.500ZM1.500 12.500H16.500V14.500H1.500Z" stroke="#222" fill="#ddd"/></svg></button>
      <span class="gap"></span>
      <button class="st tiny" aria-label="前"><svg width="6" height="9"><path d="M5 0L1 4.500L5 9Z" fill="#c8c8c8"/></svg></button>
      <button class="st" aria-label="最大化视口"><svg width="18" height="18"><path d="M1.500 1.500H16.500V16.500H1.500Z" stroke="#c71824" stroke-dasharray="3 2" fill="none"/><rect x="5.500" y="5.500" width="11" height="11" fill="#d5e9f5" stroke="#1f507c"/><rect x="8.500" y="8.500" width="5" height="5" fill="#9fc8e4" stroke="#1f507c"/><path d="M1 1H6L1 6Z" fill="#1f507c"/></svg></button>
      <button class="st tiny" aria-label="后"><svg width="6" height="9"><path d="M1 0L5 4.500L1 9Z" fill="#c8c8c8"/></svg></button>
      <button class="st" aria-label="注释可见性"><svg width="18" height="18"><path d="M8 2L10 9L16 15L9 12L2 16L6 9Z" stroke="#444" fill="#eee"/><circle cx="14" cy="10" r="3" fill="#d6efff" stroke="#2f80bd"/></svg></button>
      <button class="st" aria-label="自动缩放"><svg width="18" height="18"><path d="M9 2L11 9L17 15L9 12L3 16L7 9ZM2 5L7 2M3 8L7 5" stroke="#777" fill="#bbb"/></svg></button>
      <button class="st tiny" aria-label="设置"><svg width="7" height="16"><path d="M6 2Q1 2 3 6L1 8L3 10Q1 14 6 14" stroke="#222" fill="#ddd"/></svg></button>
      <div class="ime">
        <svg class="badge" width="17" height="17"><rect x="1" y="1" width="15" height="15" fill="#f8ded8" stroke="#cf6a5a" stroke-width="1.500"/><path d="M4 4.500H13M8.500 5L7 13M5 8.500H11.500V13M3 13.500H14" stroke="#333" fill="none"/></svg>
        <span>英</span>
        <svg width="15" height="15"><path d="M10 1Q15 5 12 11Q8 15 1 11Q10 11 10 1Z" fill="#555"/></svg>
        <svg width="15" height="15"><circle cx="4" cy="8" r="1" fill="#aaa"/><path d="M10.500 7V10L9 11" stroke="#aaa" fill="none"/></svg>
        <svg width="16" height="15"><rect x="0" y="3" width="16" height="9" rx="2" fill="#555"/><path d="M2 5.500H14M2 7.500H14M4 9.500H12" stroke="#fff" stroke-dasharray="2 1"/></svg>
        <svg width="12" height="15"><circle cx="6" cy="4" r="3" fill="#555"/><path d="M1 13V8H11V13H8V11H4V13Z" fill="#555"/></svg>
        <svg width="14" height="15"><path d="M2 13L8 7" stroke="#555" stroke-width="3"/><path d="M8 2Q5 4 6 7Q8 10 12 8L13 5L10 6L9 4L11 2Z" fill="#555"/></svg>
      </div>
    </footer>
  </div>
</template>

<style>
body { margin: 0; background: #696969; }
</style>
<style scoped>
.app { min-height: 100vh; display: flex; flex-direction: column; font: 12px/17px "Open Sans", "Noto Sans CJK SC", sans-serif; color: #2c2c2c; background: #696969; }
.app * { box-sizing: border-box; }
button, input, select { font: inherit; color: inherit; margin: 0; padding: 0; border: 0; background: none; border-radius: 0; }
svg { display: block; flex: none; }
.caret { flex: none; width: 0; height: 0; border: 3px solid transparent; border-top-color: #444; border-bottom: 0; }
.caret.wide { border-width: 4px 4px 0; }
.caret.dim { border-top-color: #3d3d3d; }
.head { display: grid; grid-template-columns: 41px 1fr; grid-template-rows: 24px 20px; background: #404040; }
.appmenu { grid-row: 1 / 3; height: 41px; border: 1px solid #222; background: linear-gradient(#ccc, #737373); }
.titlebar { display: flex; min-width: 0; background: linear-gradient(#8e8e8e, #585858); }
.quick { width: 232px; flex: none; display: flex; align-items: center; padding-left: 7px; gap: 4px; }
.plain { flex: none; }
.workspace { width: 180px; height: 22px; display: flex; align-items: center; gap: 2px; padding: 0 1px; background: linear-gradient(#dedede, #aaa); border: 1px solid #444; color: #111; }
select { appearance: none; flex: 1; min-width: 0; padding: 0; line-height: 17px; }
.qmore { width: 16px; flex: none; display: flex; align-items: center; justify-content: center; background: linear-gradient(#888, #555); }
.slim { width: 14px; }
h1 { flex: 1 1 244px; margin: 0; font: inherit; line-height: 23px; text-align: center; color: #111; background: linear-gradient(90deg, #e3fdfd, #fff 50%, #e3fdfd); padding-left: 14px; white-space: nowrap; }
.search { flex: 0 1 179px; min-width: 0; height: 23px; padding: 4px 4px 0; font-size: 11px; background: #f7f7f7; border: 1px solid #999; }
.search::placeholder { color: #7c7c7c; font-style: italic; opacity: 1; }
.account { width: 252px; flex: none; display: flex; align-items: center; gap: 5px; padding: 0 6px 0 2px; color: #fff; }
.login { display: flex; align-items: center; gap: 3px; }
.end { margin-left: auto; margin-right: 3px; }
.rule { width: 1px; height: 18px; background: #999; margin: 0 3px; }
.winzone { width: 122px; flex: none; background: linear-gradient(90deg, #dffafa, #fff 45%, #d5fafa); }
.wins { display: flex; width: 103px; height: 18px; margin-left: 16px; border: 1px solid #9ab; border-top: 0; border-radius: 0 0 4px 4px; }
.wins button { width: 27px; display: flex; justify-content: center; padding-top: 1px; }
.wins button + button { border-left: 1px solid #abb; }
.wins button:last-child { flex: 1; }
.tabs { display: flex; align-items: flex-end; padding-left: 5px; color: #fff; }
.tabs button { height: 17px; padding: 0 10px; white-space: nowrap; }
.tabs .on { padding: 0 11px; margin-right: 1px; color: #222; background: linear-gradient(#fff, #ececec); border-radius: 2px 2px 0 0; }
.tabs .later { margin-left: 4px; }
.tabs .collapse { padding: 4px 22px 4px 26px; }
.ribbon { height: 99px; display: flex; padding: 1px; background: linear-gradient(#d2d2d2, #8d8d8d); border-bottom: 1px solid #fff; }
.panel { flex: none; display: flex; flex-direction: column; background: #fdfdfd; border-right: 2px solid #aaa; border-left: 1px solid #fff; }
.body { flex: 1; display: flex; padding: 4px 2px 0; }
.panel:first-child .body { padding: 4px 1px 0 5px; }
.flush .body { padding-left: 0; }
.big { display: flex; flex-direction: column; align-items: center; height: 73px; padding-top: 2px; flex: none; white-space: nowrap; border: 1px solid transparent; }
.big svg { margin-bottom: 2px; }
.big .caret { margin-top: 4px; }
.big.on { height: 72px; border-color: #1b66b5; background: linear-gradient(#b3d3ef, #aecff0); }
.rows { flex: 1; display: flex; flex-direction: column; gap: 2px; padding-top: 1px; min-width: 0; }
.row { display: flex; justify-content: space-between; gap: 1px; }
.panel:first-child .row { justify-content: flex-end; }
.group { display: flex; height: 22px; border: 1px solid #cbcbcb; background: linear-gradient(#fff, #f0f0f0); }
.group button { width: 22px; height: 20px; display: flex; align-items: center; justify-content: center; }
.group button + button { width: 24px; border-left: 1px solid #d6d6d6; }
.group .drop, .group button + .drop { width: 12px; }
.combo { flex: 1; min-width: 0; height: 22px; display: flex; align-items: center; padding: 0 3px 0 2px; border: 1px solid #cbcbcb; background: #fafafa; gap: 1px; }
.row > .combo:not(:first-child) { flex: 0 0 100px; }
.combo .caret { border-width: 4px 4px 0; }
.panel footer { height: 17px; display: flex; align-items: center; justify-content: center; gap: 6px; background: #ececec; border-top: 1px solid #d8d8d8; position: relative; line-height: 15px; }
.launch { position: absolute; right: 1px; bottom: 4px; }
.folded { width: 61px; flex: none; display: flex; flex-direction: column; align-items: center; padding: 4px 0; background: linear-gradient(#fbfbfb, #eee); border: 1px solid #ccc; border-right: 2px solid #aaa; }
.folded svg { margin-bottom: 3px; }
.folded .caret { margin-top: auto; }
.work { flex: 1; display: flex; flex-direction: column; margin: 6px 4px 0 0; padding-left: 1px; border-top: 2px solid #a6a6a6; border-left: 1px solid #aaa; border-right: 1px solid #e3e3e3; }
.canvas { flex: 1; position: relative; background: #ebecee; border-left: 1px solid #777; border-bottom: 1px solid #666; border-top: 1px solid #777; overflow: hidden; }
.paper { position: absolute; inset: 21px 264px 22px 263px; padding: 43px 14px 43px; background: #fff; border: 1px solid #000; box-shadow: 4px 4px #000; }
.paper::after { content: ""; position: absolute; top: -1px; right: -5px; width: 4px; height: 8px; background: #ebecee; }
.docwins { position: absolute; right: 9px; top: 6px; display: flex; gap: 6px; }
.cross { position: absolute; right: 70px; top: 181px; }
.ucsicon { position: absolute; left: 10px; bottom: 9px; }
.navbar { position: absolute; right: 2px; top: 224px; }
.console { position: absolute; left: 254px; right: 255px; bottom: 1px; display: flex; flex-direction: column; align-items: flex-start; gap: 1px; }
.console p { margin: 0 0 0 57px; padding: 0 1px; height: 15px; font: 13px/15px "Liberation Mono", "Noto Sans CJK SC", monospace; color: #fff; white-space: nowrap; border-radius: 2px; }
.console .one { background: rgb(130 130 130 / .75); }
.console .two { background: rgb(125 125 125 / .85); }
.console .three { background: rgb(110 110 110 / .92); }
.cmd { align-self: stretch; height: 26px; display: flex; align-items: center; border: 1px solid #999; border-radius: 3px; background: rgb(255 255 255 / .72); overflow: hidden; }
.grip { background: linear-gradient(rgb(120 120 120 / .85), rgb(80 80 80 / .9)); margin-right: 4px; }
.cmd input { flex: 1; min-width: 0; }
.cmd input::placeholder { color: #999; opacity: 1; font-style: italic; }
.upcaret { border: 4px solid transparent; border-top: 0; border-bottom: 5px solid #555; margin-right: 3px; }
.sheets { height: 17px; display: flex; background: #f0f0f0; color: #000; border-bottom: 1px solid #fff; padding-left: 1px; }
.step { width: 14px; border-right: 1px solid #aaa; overflow: hidden; display: flex; align-items: center; }
.sheet { position: relative; height: 16px; padding: 0 9px; margin-right: -2px; line-height: 16px; }
.sheet svg { position: absolute; inset: 0; width: 100%; height: 100%; fill: #f0f0f0; stroke: #555; }
.sheet.on svg { fill: #fff; }
.sheet span { position: relative; }
.status { height: 21px; display: flex; border-top: 1px solid #000; background: linear-gradient(#999, #777); }
.status output { width: 199px; flex: none; padding: 4px 0 0 12px; font: 10px/17px "Liberation Mono", monospace; color: #000; white-space: pre; }
.st { width: 22px; flex: none; display: flex; align-items: center; justify-content: center; border-left: 1px solid #666; border-top: 1px solid #c7c7c7; background: linear-gradient(#bbb, #9d9d9d); color: #000; }
.st.on { background: linear-gradient(#e0f2f6, #9acbdc); }
.st.space { width: 31px; }
.st.tiny { width: 14px; }
.grow { flex: 1; border-left: 1px solid #555; }
.gap { width: 35px; border-left: 1px solid #555; }
.ime { width: 146px; flex: none; display: flex; align-items: center; justify-content: space-between; padding: 0 6px 0 5px; background: linear-gradient(#fff, #ececec); color: #444; }
</style>
